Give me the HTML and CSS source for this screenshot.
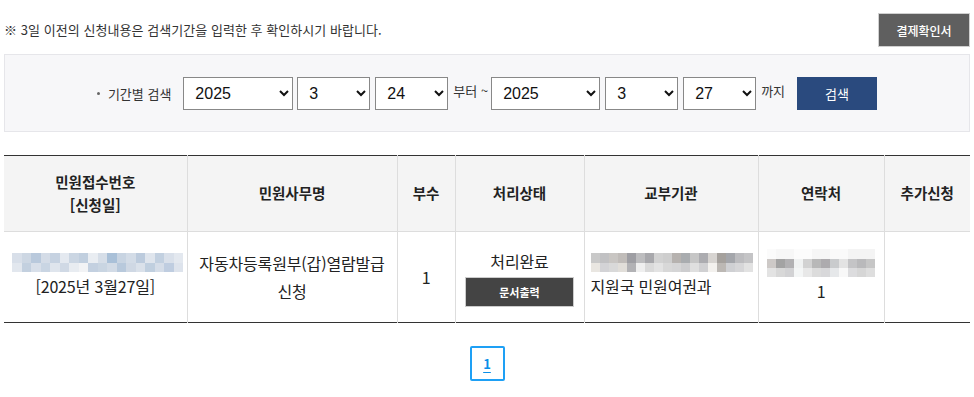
FILE: index.html
```html
<!DOCTYPE html>
<html lang="ko">
<head>
<meta charset="utf-8">
<title>민원신청내역</title>
<link rel="stylesheet" href="styles.css">
</head>
<body>
<div class="wrap">
  <div class="topbar">
    <p class="notice">※ 3일 이전의 신청내용은 검색기간을 입력한 후 확인하시기 바랍니다.</p>
    <button class="btn-receipt" type="button">결제확인서</button>
  </div>

  <div class="searchbox">
    <span class="label"><span class="dot"></span>기간별 검색</span>
    <select class="sel sel-year"><option>2025</option></select>
    <select class="sel sel-sm"><option>3</option></select>
    <select class="sel sel-sm"><option>24</option></select>
    <span class="txt">부터 ~</span>
    <select class="sel sel-year2"><option>2025</option></select>
    <select class="sel sel-sm"><option>3</option></select>
    <select class="sel sel-sm"><option>27</option></select>
    <span class="txt">까지</span>
    <button class="btn-search" type="button">검색</button>
  </div>

  <table class="list">
    <colgroup>
      <col class="c1"><col class="c2"><col class="c3"><col class="c4"><col class="c5"><col class="c6"><col class="c7">
    </colgroup>
    <thead>
      <tr>
        <th>민원접수번호<br>[신청일]</th>
        <th>민원사무명</th>
        <th>부수</th>
        <th>처리상태</th>
        <th>교부기관</th>
        <th>연락처</th>
        <th>추가신청</th>
      </tr>
    </thead>
    <tbody>
      <tr>
        <td><div class="blur blur-a"></div><div class="line">[2025년 3월27일]</div></td>
        <td><div class="line">자동차등록원부(갑)열람발급</div><div class="line">신청</div></td>
        <td><div class="line">1</div></td>
        <td><div class="line">처리완료</div><button class="btn-print" type="button">문서출력</button></td>
        <td class="left"><div class="blur blur-b"></div><div class="line">지원국 민원여권과</div></td>
        <td><div class="blur blur-c"></div><div class="line">1</div></td>
        <td></td>
      </tr>
    </tbody>
  </table>

  <div class="paging">
    <a class="page on" href="#">1</a>
  </div>
</div>
</body>
</html>
```
FILE: styles.css
```css
* { box-sizing: border-box; }
html, body { margin: 0; padding: 0; background: #fff; }
body {
  font-family: "Noto Sans CJK KR", "Noto Sans", sans-serif;
  color: #222;
}
.wrap { padding: 0 4px; width: 974px; }

.topbar {
  display: flex;
  justify-content: space-between;
  align-items: center;
  padding-top: 13px;
}
.notice {
  margin: 0;
  font-size: 13px;
  letter-spacing: 0.05px;
  color: #333;
  line-height: 20px;
}
.btn-receipt {
  width: 92px;
  height: 34px;
  background: #5f5f5f;
  border: 1px solid #d0d0d0;
  color: #fff;
  font-family: "Noto Sans CJK KR", sans-serif;
  font-size: 12px;
  font-weight: 500;
  letter-spacing: 0;
  padding: 0;
  margin-right: 0;
}

.searchbox {
  margin-top: 7px;
  height: 78px;
  background: #f7f7f9;
  border: 1px solid #e6e6ea;
  display: flex;
  align-items: center;
  justify-content: center;
  padding-left: 0;
}
.label {
  font-size: 13px;
  letter-spacing: 0;
  color: #333;
  display: flex;
  align-items: center;
  margin-right: 12px;
}
.dot {
  width: 3px; height: 3px; background: #666; border-radius: 50%;
  margin-right: 8px;
}
.sel {
  height: 33px;
  border: 1px solid #888;
  background: #fff;
  font-family: "Liberation Sans", Arial, sans-serif;
  font-size: 16px;
  color: #111;
  padding: 0 4px 0 7px;
  border-radius: 0;
}
.sel-year { width: 110px; margin-right: 4px; }
.sel-year2 { width: 109px; margin-right: 5px; }
.sel-sm { width: 73px; margin-right: 5px; }
.txt {
  font-size: 13px;
  letter-spacing: 0;
  color: #333;
  margin-right: 3px;
  align-self: flex-start;
  margin-top: 26px;
  line-height: 20px;
}
.btn-search {
  margin-left: 9px;
  width: 80px;
  height: 33px;
  background: #2a4a7e;
  border: 0;
  color: #fff;
  font-family: "Noto Sans CJK KR", sans-serif;
  font-size: 13px;
  letter-spacing: 0;
}

.list {
  margin-top: 23px;
  width: 966px;
  border-collapse: collapse;
  table-layout: fixed;
  border-top: 1px solid #333;
  border-bottom: 1px solid #333;
}
.c1 { width: 183px; }
.c2 { width: 210px; }
.c3 { width: 58px; }
.c4 { width: 129px; }
.c5 { width: 174px; }
.c6 { width: 126px; }
.c7 { width: 86px; }
.list th {
  height: 76px;
  background: #f4f4f4;
  font-size: 14.5px;
  font-weight: 700;
  letter-spacing: 0;
  line-height: 22.5px;
  color: #222;
  border-right: 1px solid #ddd;
  border-bottom: 1px solid #ddd;
  padding: 0;
  text-align: center;
  vertical-align: middle;
}
.list td {
  height: 91px;
  font-size: 16px;
  letter-spacing: -0.15px;
  color: #222;
  border-right: 1px solid #ddd;
  padding: 0;
  text-align: center;
  vertical-align: middle;
}
.list th:last-child, .list td:last-child { border-right: 0; }
.list td.left { text-align: left; padding-left: 6px; }
.line { line-height: 28.5px; }

.btn-print {
  display: inline-block;
  width: 109px;
  height: 30px;
  background: #444;
  border: 1px solid #ccc;
  color: #fff;
  font-family: "Noto Sans CJK KR", sans-serif;
  font-size: 11px;
  font-weight: 700;
  letter-spacing: 0;
  margin-top: 1px;
  padding: 0;
}

.blur { height: 19px; margin: 0 auto; }
.blur-a {
  width: 171px;
  margin-left: 8px;
  background:
    linear-gradient(90deg, #d8dfe9 0 10px, #cdd7e3 10px 19px, #b9c9dc 19px 29px, #d4dce7 29px 38px, #c6d2e1 38px 48px, #e4e9f0 48px 57px, #cbd6e3 57px 67px, #c1cfdf 67px 76px, #e9edf2 76px 86px, #d6dee8 86px 95px, #a9c0d8 95px 105px, #c8d4e2 105px 114px, #d3dce7 114px 124px, #bccbdd 124px 133px, #dfe5ed 133px 143px, #c2d0e0 143px 152px, #d9e0ea 152px 162px, #e3e8ef 162px 171px) top / 171px 10px no-repeat,
    linear-gradient(90deg, #e2e7ee 0 10px, #c3d0df 10px 19px, #d8dfe9 19px 29px, #c9d5e3 29px 38px, #dfe5ed 38px 48px, #d0d9e5 48px 57px, #e8ecf1 57px 67px, #f2f3f5 67px 76px, #c3d0e0 76px 86px, #c9d5e2 86px 95px, #d2dbe6 95px 105px, #b8c9dc 105px 114px, #cfd8e4 114px 124px, #dae1ea 124px 133px, #c0cfdf 133px 143px, #d5dde8 143px 152px, #bfcde0 152px 162px, #dde3ec 162px 171px) bottom / 171px 9px no-repeat;
}
.blur-b {
  width: 162px;
  margin-left: 0;
  background:
    linear-gradient(90deg, #c9c9c9 0 9px, #c1c1c3 9px 18px, #c9c6c3 18px 27px, #c0bcb9 27px 36px, #9e9ea3 36px 45px, #bdbdbf 45px 54px, #a8a8ac 54px 63px, #d2d2d2 63px 72px, #cecece 72px 81px, #b6b2af 81px 90px, #a9acaf 90px 99px, #c6c6c6 99px 108px, #acacb0 108px 117px, #d7d4d1 117px 126px, #a5a19d 126px 135px, #a4a6ab 135px 144px, #bcbcbf 144px 153px, #c4c4c6 153px 162px) top / 162px 10px no-repeat,
    linear-gradient(90deg, #e9e6e1 0 9px, #d3d3d6 9px 18px, #d9d9d9 18px 27px, #e1ded9 27px 36px, #b2b2b5 36px 45px, #efefef 45px 54px, #dadada 54px 63px, #e3e3e3 63px 72px, #d8d8d8 72px 81px, #d5d5d6 81px 90px, #cdcdcf 90px 99px, #dfdfdf 99px 108px, #d0d0d2 108px 117px, #f3f1ee 117px 126px, #bcb8b4 126px 135px, #cfd0d3 135px 144px, #d6d6d8 144px 153px, #e2e2e2 153px 162px) bottom / 162px 9px no-repeat;
}
.blur-c {
  width: 108px;
  height: 28px;
  margin-left: 8px;
  background:
    linear-gradient(90deg, #fbfbfb 0 9px, #f7f7f7 9px 27px, #fcfcfc 27px 45px, #f6f6f6 45px 63px, #fafafa 63px 81px, #f4f4f4 81px 108px) top / 108px 10px no-repeat,
    linear-gradient(90deg, #cdc9c7 0 9px, #a3a3a3 9px 18px, #b2b1b3 18px 27px, #f0f2f2 27px 36px, #d2d2d2 36px 45px, #b8b8b8 45px 54px, #adabae 54px 63px, #c9cbcd 63px 72px, #e3e3e3 72px 81px, #c4c4c6 81px 90px, #b9b9bb 90px 99px, #c6c6c6 99px 108px) 0 10px / 108px 9px no-repeat,
    linear-gradient(90deg, #e3e3e3 0 9px, #d8d8d8 9px 18px, #d2d2d4 18px 27px, #f4f6f6 27px 36px, #e8e8e8 36px 45px, #dcdcdc 45px 54px, #d8d8da 54px 63px, #e6e8ea 63px 72px, #f8f8f8 72px 81px, #dcdcde 81px 90px, #d6d6d6 90px 99px, #dedede 99px 108px) bottom / 108px 9px no-repeat;
}

.paging {
  display: flex;
  justify-content: center;
  margin-top: 23px;
}
.page {
  width: 35px;
  height: 35px;
  display: flex;
  align-items: center;
  justify-content: center;
  border: 2px solid #1ea0f5;
  border-radius: 2px;
  color: #0a8fe8;
  font-family: "Noto Sans CJK KR", sans-serif;
  font-size: 13px;
  font-weight: 700;
  text-decoration: underline;
  text-underline-offset: 3px;
}
```
